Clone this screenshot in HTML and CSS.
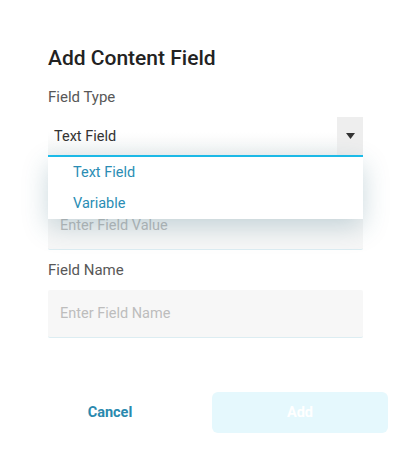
FILE: index.html
```html
<!DOCTYPE html>
<html>
<head>
<meta charset="utf-8">
<link rel="stylesheet" href="styles.css">
</head>
<body>
<div class="dialog">
  <h2 class="title">Add Content Field</h2>
  <div class="group group-type">
    <div class="label">Field Type</div>
    <div class="select-wrap">
      <div class="select">
        <span class="select-value">Text Field</span>
        <span class="select-arrow">
          <svg width="9" height="6" viewBox="0 0 9 6"><path d="M0 0 L9 0 L4.5 6 Z" fill="#333"/></svg>
        </span>
      </div>
      <ul class="menu">
        <li class="menu-item">Text Field</li>
        <li class="menu-item">Variable</li>
      </ul>
    </div>
  </div>
  <div class="group group-value">
    <div class="label">Field Value</div>
    <div class="input"><span class="placeholder">Enter Field Value</span></div>
  </div>
  <div class="group group-name">
    <div class="label">Field Name</div>
    <div class="input"><span class="placeholder">Enter Field Name</span></div>
  </div>
</div>
<div class="footer">
  <button class="btn btn-cancel">Cancel</button>
  <button class="btn btn-add">Add</button>
</div>
</body>
</html>
```
FILE: styles.css
```css
html, body {
  margin: 0;
  padding: 0;
  background: #ffffff;
  font-family: Roboto, "Liberation Sans", sans-serif;
}
.dialog {
  padding: 46px 47px 0 48px;
}
.title {
  margin: 0;
  font-size: 21px;
  line-height: 24px;
  font-weight: 500;
  color: #222222;
}
.group {
  display: flex;
  flex-direction: column;
  gap: 10px;
}
.group-type {
  margin-top: 17px;
}
.group-value {
  margin-top: 15px;
}
.group-name {
  margin-top: 10px;
}
.label {
  font-size: 15px;
  line-height: 20px;
  color: #585858;
}
.select-wrap {
  position: relative;
}
.select {
  height: 38px;
  display: flex;
  align-items: center;
  justify-content: space-between;
  border-bottom: 2px solid #1cbfee;
  background: linear-gradient(#ffffff 40%, #f2f4f4);
}
.select-value {
  padding-left: 6px;
  font-size: 14.5px;
  color: #333333;
}
.select-arrow {
  width: 26px;
  height: 38px;
  display: flex;
  align-items: center;
  justify-content: center;
  background: #eeeeee;
}
.menu {
  position: absolute;
  left: 0;
  right: 0;
  top: 40px;
  margin: 0;
  padding: 0;
  list-style: none;
  background: #ffffff;
  box-shadow: 0 8px 26px rgba(40, 100, 120, 0.25);
  z-index: 5;
}
.menu-item {
  height: 31px;
  line-height: 31px;
  padding-left: 25px;
  font-size: 14.5px;
  color: #2a8db4;
}
.input {
  height: 47px;
  display: flex;
  align-items: center;
  background: #f7f7f7;
  border-bottom: 1px solid #dcedf2;
  border-radius: 2px;
}
.placeholder {
  padding-left: 12px;
  font-size: 14.5px;
  color: #bdbdbd;
}
.footer {
  margin-top: 54px;
  padding: 0 22px;
  display: flex;
  gap: 14px;
}
.btn {
  flex: 1;
  height: 41px;
  border: none;
  border-radius: 6px;
  font-family: Roboto, "Liberation Sans", sans-serif;
  font-size: 14.5px;
  font-weight: 700;
  cursor: pointer;
}
.btn-cancel {
  background: transparent;
  color: #2a89ae;
}
.btn-add {
  background: #e5f8fd;
  color: #ffffff;
}
```
